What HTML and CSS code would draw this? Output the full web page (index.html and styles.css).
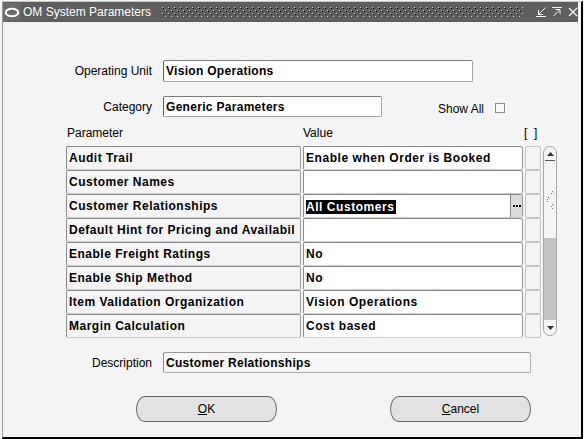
FILE: index.html
```html
<!DOCTYPE html>
<html>
<head>
<meta charset="utf-8">
<title>OM System Parameters</title>
<link rel="stylesheet" href="styles.css">
</head>
<body>
<div class="window">
  <div class="titlebar">
    <span class="appicon"><svg width="16" height="11" viewBox="0 0 16 11"><ellipse cx="8" cy="5.5" rx="6.3" ry="3.8" fill="none" stroke="#fff" stroke-width="2"/></svg></span>
    <span class="title">OM System Parameters</span>
    <span class="grip"><svg width="361" height="10" viewBox="0 0 361 10"><defs><pattern id="dots" width="6" height="6" patternUnits="userSpaceOnUse"><rect x="0" y="0" width="1" height="1" fill="#d0d0d0"/><rect x="1" y="1" width="1" height="1" fill="#000"/><rect x="3" y="3" width="1" height="1" fill="#d0d0d0"/><rect x="4" y="4" width="1" height="1" fill="#000"/></pattern></defs><rect width="361" height="10" fill="url(#dots)"/></svg></span>
    <span class="winbtns">
      <svg width="11" height="10" viewBox="0 0 11 10"><path d="M9.5 0.5 L3 7 M2.5 3 V7.5 H7 M0 9.5 H10" stroke="#f4f4f4" fill="none"/></svg>
      <svg width="11" height="10" viewBox="0 0 11 10"><path d="M0 0.5 H10 M1.5 9 L7.5 3 M3.5 2.5 H8 V7" stroke="#f4f4f4" fill="none"/></svg>
      <svg width="10" height="10" viewBox="0 0 10 10"><path d="M1 1 L9 9 M9 1 L1 9" stroke="#f4f4f4" stroke-width="1.4" fill="none"/></svg>
    </span>
  </div>
  <div class="content">
    <div class="field-row ou">
      <span class="lbl">Operating Unit</span>
      <div class="input ou-input">Vision Operations</div>
    </div>
    <div class="field-row cat">
      <span class="lbl">Category</span>
      <div class="input cat-input">Generic Parameters</div>
      <span class="showall">Show All</span>
      <span class="checkbox"></span>
    </div>
    <div class="grid-head">
      <span class="h-param">Parameter</span>
      <span class="h-value">Value</span>
      <span class="h-sel">[&nbsp;&nbsp;]</span>
    </div>
    <div class="table">
      <div class="rows">
        <div class="row"><div class="cell param">Audit Trail</div><div class="cell value">Enable when Order is Booked</div><div class="cell sel"></div></div>
        <div class="row"><div class="cell param">Customer Names</div><div class="cell value"></div><div class="cell sel"></div></div>
        <div class="row"><div class="cell param">Customer Relationships</div><div class="cell value active"><span class="hl">All Customers</span><span class="dots"><svg width="8" height="2" viewBox="0 0 8 2"><rect x="0" y="0" width="2" height="2" fill="#000"/><rect x="3" y="0" width="2" height="2" fill="#000"/><rect x="6" y="0" width="2" height="2" fill="#000"/></svg></span></div><div class="cell sel"></div></div>
        <div class="row"><div class="cell param">Default Hint for Pricing and Availabil</div><div class="cell value"></div><div class="cell sel"></div></div>
        <div class="row"><div class="cell param">Enable Freight Ratings</div><div class="cell value">No</div><div class="cell sel"></div></div>
        <div class="row"><div class="cell param">Enable Ship Method</div><div class="cell value">No</div><div class="cell sel"></div></div>
        <div class="row"><div class="cell param">Item Validation Organization</div><div class="cell value">Vision Operations</div><div class="cell sel"></div></div>
        <div class="row"><div class="cell param">Margin Calculation</div><div class="cell value">Cost based</div><div class="cell sel"></div></div>
      </div>
      <div class="scrollbar">
        <div class="sb-up"><svg width="7" height="4" viewBox="0 0 7 4"><path d="M0 4 L3.5 0 L7 4 Z" fill="#333"/></svg></div>
        <div class="sb-thumb"><svg width="9" height="18" viewBox="0 0 9 18"><rect x="6" y="0" width="1" height="1" fill="#777"/><rect x="7" y="1" width="1" height="1" fill="#bbb"/><rect x="5" y="2" width="1" height="1" fill="#777"/><rect x="2" y="6" width="1" height="1" fill="#777"/><rect x="3" y="7" width="1" height="1" fill="#bbb"/><rect x="1" y="8" width="1" height="1" fill="#777"/><rect x="1" y="10" width="1" height="1" fill="#777"/><rect x="6" y="13" width="1" height="1" fill="#777"/><rect x="7" y="14" width="1" height="1" fill="#bbb"/><rect x="5" y="15" width="1" height="1" fill="#777"/><rect x="6" y="17" width="1" height="1" fill="#777"/></svg></div>
        <div class="sb-track"></div>
        <div class="sb-down"><svg width="7" height="4" viewBox="0 0 7 4"><path d="M0 0 L7 0 L3.5 4 Z" fill="#333"/></svg></div>
      </div>
    </div>
    <div class="field-row desc">
      <span class="lbl">Description</span>
      <div class="input desc-input">Customer Relationships</div>
    </div>
    <div class="buttons">
      <div class="btn"><span class="u">O</span>K</div>
      <div class="btn"><span class="u">C</span>ancel</div>
    </div>
  </div>
</div>
</body>
</html>
```
FILE: styles.css
```css
* { box-sizing: border-box; }
body {
  margin: 0;
  background: #f4f4f4;
  font-family: "Liberation Sans", Arial, sans-serif;
  font-size: 12px;
  color: #000;
}
.window {
  margin: 1px 0 0 2px;
  width: 581px;
  height: 438px;
  border-top: 1px solid #c8c8c8;
  border-left: 1px solid #9c9c9c;
  border-right: 2px solid #000;
  border-bottom: 2px solid #000;
  background: #f4f4f4;
  display: flex;
  flex-direction: column;
}
.titlebar {
  flex: none;
  height: 20px;
  margin-right: 3px;
  background: #5e5e5e;
  display: flex;
  align-items: center;
  color: #fff;
}
.appicon {
  width: 18px;
  height: 18px;
  background: #6a6a6a;
  display: flex;
  align-items: center;
  justify-content: center;
}
.title {
  margin-left: 2px;
  width: 129px;
  white-space: nowrap;
  line-height: 21px;
}
.grip {
  margin-left: 10px;
  width: 361px;
  height: 10px;
  display: flex;
}
.winbtns {
  margin-left: 13px;
  display: flex;
  gap: 5px;
}
.content {
  padding-top: 38px;
  display: flex;
  flex-direction: column;
}
.field-row {
  display: flex;
  align-items: center;
}
.lbl {
  width: 149px;
  margin-right: 11px;
  text-align: right;
  white-space: nowrap;
}
.input {
  border: 1px solid #a4a4a4;
  border-left-color: #5a5a5a;
  border-top-color: #7c7c7c;
  border-radius: 2px;
  background: #fff;
  font-weight: bold;
  letter-spacing: 0.3px;
  padding-left: 2px;
  white-space: nowrap;
  overflow: hidden;
}
.ou { height: 22px; }
.ou-input { width: 310px; height: 22px; line-height: 20px; }
.cat { margin-top: 14px; height: 21px; }
.cat .lbl { padding-top: 1px; }
.cat-input { width: 219px; height: 21px; line-height: 20px; }
.showall {
  margin-left: 56px;
  padding-top: 4px;
}
.checkbox {
  width: 10px;
  height: 10px;
  margin-left: 11px;
  margin-top: 2px;
  border: 1px solid #8c8c8c;
  background: #fafafa;
}
.grid-head {
  margin: 9px 0 0 63px;
  display: flex;
  height: 14px;
  line-height: 15px;
}
.h-param { width: 237px; padding-left: 1px; }
.h-value { width: 221px; }
.table {
  margin: 6px 0 0 63px;
  display: flex;
  gap: 2px;
}
.rows {
  display: flex;
  flex-direction: column;
}
.row {
  display: flex;
  gap: 2px;
  height: 24px;
}
.cell {
  height: 24px;
  border: 1px solid #8a8a8a;
  border-bottom-color: #cccccc;
  border-right-color: #9a9a9a;
  border-radius: 2px;
  line-height: 23px;
  font-weight: bold;
  letter-spacing: 0.55px;
  white-space: nowrap;
  overflow: hidden;
  padding-left: 2px;
}
.param { width: 235px; background: #f4f4f4; letter-spacing: 0.5px; }
.value { width: 220px; background: #fff; display: flex; align-items: center; border-radius: 2px 3px 3px 2px; }
.sel { width: 16px; background: #f4f4f4; border-color: #c4c4c4; }
.hl {
  background: #000;
  color: #fff;
  line-height: 14px;
  margin-top: 1px;
  padding: 0 1px 0 0;
}
.dots {
  margin-left: auto;
  width: 12px;
  height: 22px;
  background: #dcdcdc;
  border-left: 1px solid #8a8a8a;
  display: flex;
  align-items: center;
  justify-content: center;
}
.scrollbar {
  width: 14px;
  height: 190px;
  border: 1px solid #a8a8a8;
  border-radius: 7px;
  overflow: hidden;
  background: #f4f4f4;
  display: flex;
  flex-direction: column;
}
.sb-up {
  flex: none;
  height: 14px;
  margin: 0 1px;
  border-bottom: 1px solid #505050;
  display: flex;
  align-items: center;
  justify-content: center;
}
.sb-thumb {
  flex: none;
  height: 77px;
  display: flex;
  align-items: center;
  justify-content: center;
}
.sb-track {
  flex: 1;
  background: #c4c4c4;
}
.sb-down {
  flex: none;
  height: 15px;
  display: flex;
  align-items: center;
  justify-content: center;
}
.desc { margin-top: 14px; height: 21px; }
.desc .lbl { padding-top: 1px; }
.desc-input {
  width: 368px;
  height: 21px;
  line-height: 20px;
  background: #f6f6f6;
  border-color: #b0b0b0;
  border-left-color: #8a8a8a;
  border-top-color: #9a9a9a;
}
.buttons {
  margin: 23px 0 0 133px;
  display: flex;
  gap: 113px;
}
.btn {
  width: 141px;
  height: 26px;
  border: 1px solid #6a6a6a;
  border-radius: 9px / 13px;
  background: #e2e2e2;
  display: flex;
  align-items: center;
  justify-content: center;
}
.u { text-decoration: underline; }
```
